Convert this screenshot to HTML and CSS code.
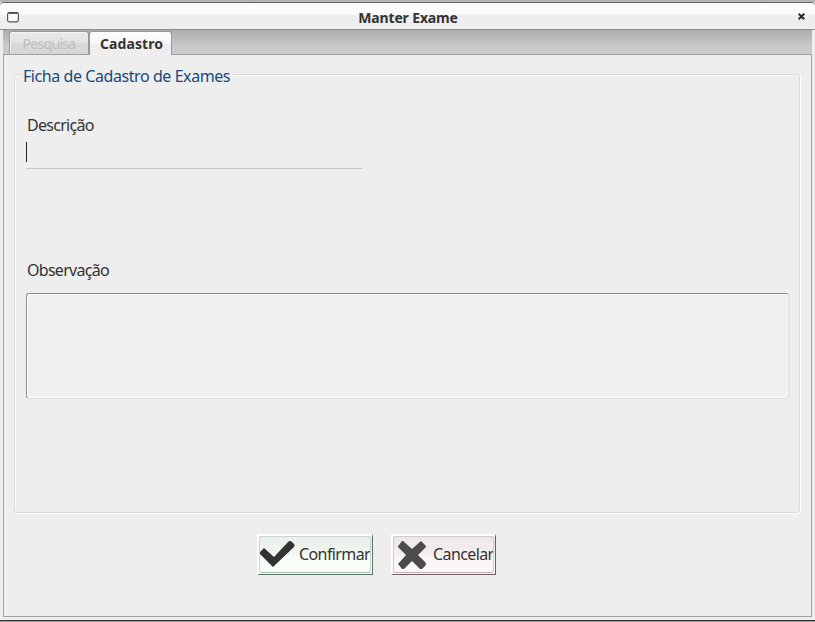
FILE: index.html
```
<!DOCTYPE html>
<html lang="pt-BR">
<head>
<meta charset="utf-8">
<title>Manter Exame</title>
<link rel="stylesheet" href="styles.css">
</head>
<body>
<main class="window">
  <header class="titlebar">
    <svg class="window-icon" width="12" height="11" viewBox="0 0 12 11"><rect x=".6" y=".7" width="10.8" height="9.2" rx="1.8" fill="#fff" stroke="#555" stroke-width="1.2"/><path d="M1.5 1h9" stroke="#444" stroke-width="1.6"/></svg>
    <h1 class="title">Manter Exame</h1>
    <svg class="close" width="7" height="7" viewBox="0 0 7 7"><path d="M.7.7l5.6 5.6M6.3.7L.7 6.3" stroke="#2b2b2b" stroke-width="2"/></svg>
  </header>
  <nav class="tabs">
    <span class="tab disabled"><span>Pesquisa</span></span>
    <span class="tab active"><span>Cadastro</span></span>
  </nav>
  <section class="panel">
    <div class="group">
      <h2 class="legend">Ficha de Cadastro de Exames</h2>
      <div class="label description">Descrição</div>
      <div class="input"><span class="caret"></span></div>
      <div class="label observation">Observação</div>
      <div class="textarea"></div>
    </div>
    <div class="actions">
      <button class="button confirm">
        <svg width="36" height="28" viewBox="0 0 36 28"><path d="M0 12l5-5 10 9L29 1q2-2 4 0l2 2q1 1 0 3L14 26z" fill="#333"/></svg>
        <span>Confirmar</span>
      </button>
      <button class="button cancel">
        <svg width="28" height="28" viewBox="0 0 28 28"><path d="M5 0l9 8 9-8 5 5q0 1-1 2l-7 7 8 8q0 2-1 3l-3 3h-2l-8-8-8 8H4l-4-5 8-9-8-8q0-1 1-2l3-4z" fill="#4b4b4b"/></svg>
        <span>Cancelar</span>
      </button>
    </div>
  </section>
</main>
</body>
</html>
```
FILE: styles.css
```
* { box-sizing: border-box; }
body { margin: 0; background: #eee; color: #333; font: 16px/20px "Noto Sans", sans-serif; }
.window { width: 815px; height: 622px; border-top: 2px solid #b5b5b5; border-bottom: 1px solid #999; box-shadow: inset 0 -1px #333; }
.titlebar { height: 28px; display: flex; align-items: center; padding: 0 10px 0 7px; border-top: 1px solid #666; border-bottom: 1px solid #8e918f; border-radius: 4px 4px 0 0; background: linear-gradient(#fff, #f8f8f8 45%, #eee 46%, #eee); }
.window-icon { margin-top: 2px; }
.title { flex: 1; margin: 3px 0 0 -1px; text-align: center; font-size: 14px; line-height: 18px; letter-spacing: -.15px; }
.close { margin-top: 1px; }
.tabs { height: 25px; margin: 0 3px; padding-left: 6px; display: flex; align-items: flex-end; background: linear-gradient(#acacac, #cbcbcb 70%); border-bottom: 1px solid #a0a0a0; }
.tab { display: flex; align-items: center; justify-content: center; border: 1px solid #999; border-bottom: 0; border-radius: 3px 3px 0 0; font-size: 14px; white-space: nowrap; }
.disabled { width: 80px; height: 23px; padding-top: 2px; color: #bebebe; background: linear-gradient(#e9e9e9, #e3e3e3 50%, #d9d9d9 51%, #d6d6d6); letter-spacing: -.7px; box-shadow: inset 1px 1px #f2f2f2; }
.active { width: 83px; height: 24px; margin-bottom: -1px; padding-left: 2px; background: linear-gradient(#fff, #f8f8f8 50%, #eee 52%); font-weight: 700; letter-spacing: .1px; }
.panel { height: 562px; margin: 0 3px; padding: 19px 11px 0 10px; border: 1px solid #a1a1a1; border-top: 0; }
.group { width: 786px; height: 439px; padding: 0 10px 0 11px; border: 1px solid #dadada; border-radius: 3px; box-shadow: 1px 1px #fff, inset 1px 1px #fff; }
.legend { width: fit-content; margin: -9px 0 0 -5px; padding: 0 3px 0 2px; height: 20px; color: #174a7c; background: #eee; font: inherit; letter-spacing: -.43px; white-space: nowrap; }
.label { height: 20px; letter-spacing: -.72px; padding-left: 1px; }
.description { margin-top: 29px; }
.input { width: 336px; height: 33px; margin-top: 1px; border-bottom: 1px solid #c8c8c8; padding-top: 6px; }
.caret { display: block; width: 1px; height: 20px; background: #222; }
.observation { margin-top: 91px; }
.textarea { height: 106px; margin-top: 13px; background: #efefef; border: 1px solid #dedede; border-top-color: #909090; border-left-color: #909090; border-radius: 3px; box-shadow: inset 1px 1px #fff, inset -2px -2px #f6f6f6; }
.actions { display: flex; gap: 18px; margin: 21px 0 0 243px; }
.button { height: 41px; margin: 0; padding: 0; display: flex; align-items: center; font: inherit; color: #333; border: 1px solid; border-width: 2px 1px 1px 2px; position: relative; white-space: nowrap; letter-spacing: -.6px; }
.button span { margin-top: -2px; }
.button::after { content: ""; position: absolute; inset: 0 1px 1px 0; border: 1px solid #ccd2cf; border-bottom-color: #aebbb2; border-radius: 3px; }
.confirm { width: 116px; border-color: #fff #567660 #567660 #fff; background: linear-gradient(#e9f0e9, #f0f5ef 45%, #f7fcf7 55%, #f7fdf7); }
.confirm span { margin-left: 4px; }
.cancel { width: 105px; padding-left: 5px; border-color: #fff #765860 #765860 #fff; background: linear-gradient(#eee7e7, #f3eeee 45%, #fbf5f5 55%, #fcf7f7); }
.button.cancel::after { border-color: #d0caca #d0caca #bdb5b5; }
.cancel span { margin-left: 7px; }
```
